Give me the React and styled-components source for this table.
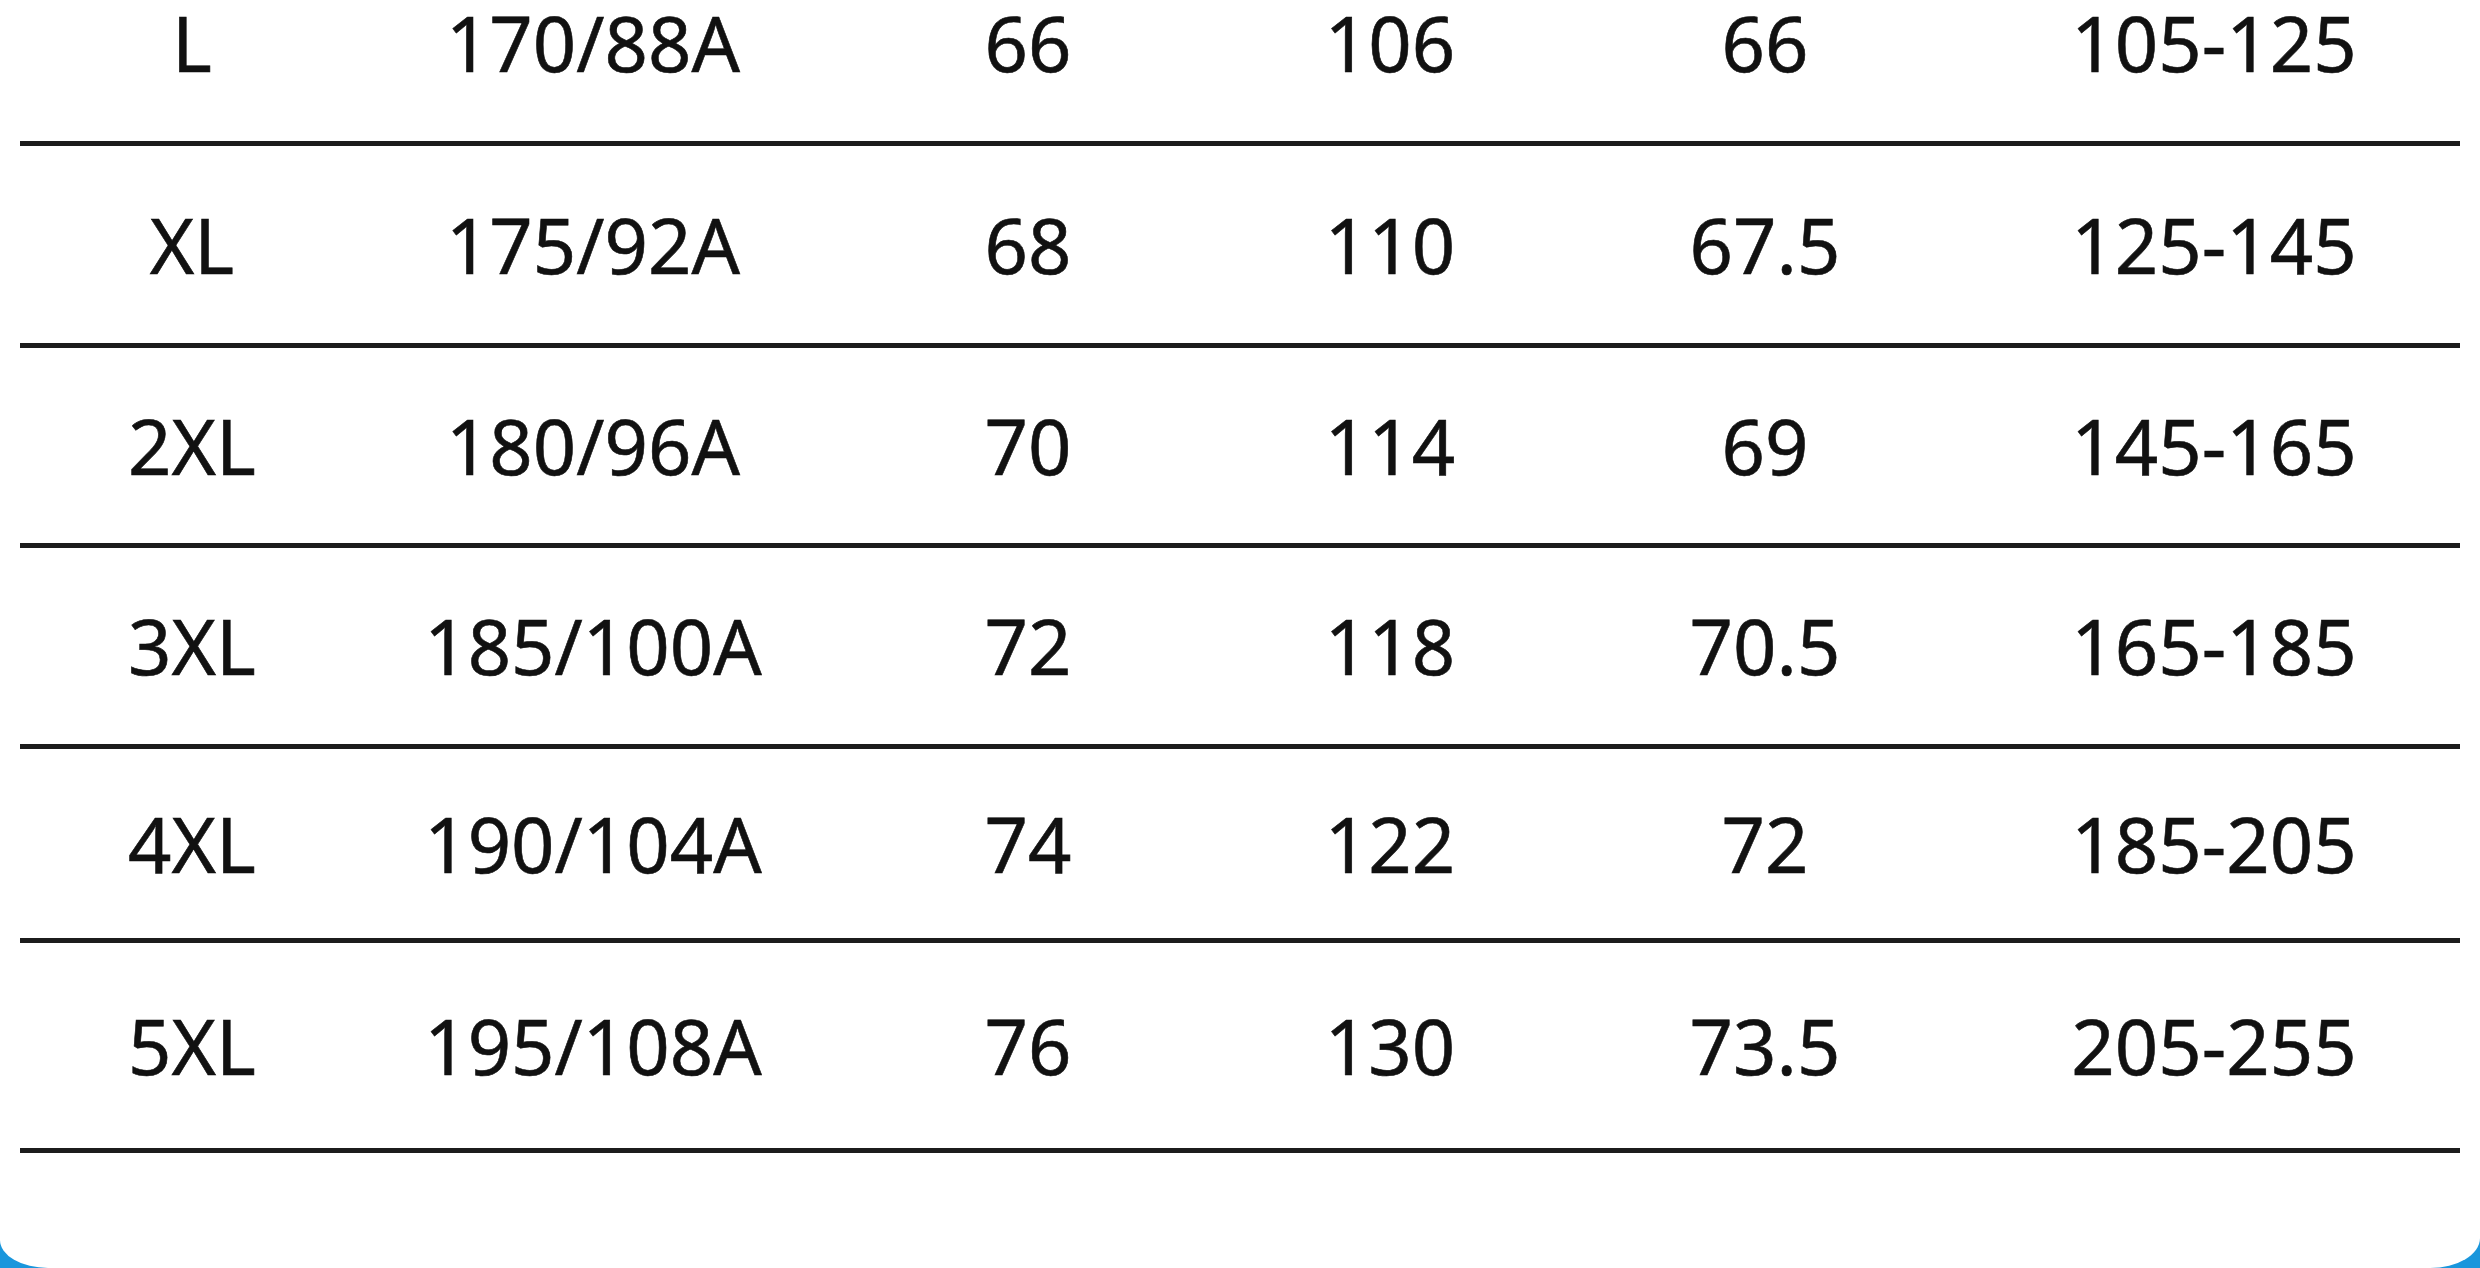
import styled, { createGlobalStyle } from 'styled-components';

const GlobalStyle = createGlobalStyle`
  html, body {
    margin: 0;
    padding: 0;
    overflow: hidden;
    background: #1996dc;
  }
`

const Sheet = styled.div`
  width: 2480px;
  height: 1268px;
  overflow: hidden;
  background: #ffffff;
  border-bottom-left-radius: 48px 28px;
  border-bottom-right-radius: 50px 30px;
`

const Table = styled.div`
  display: flex;
  flex-direction: column;
  margin: 0 20px;
`

const Row = styled.div`
  display: grid;
  grid-template-columns: 344px 458px 412px 312px 438px 460px;
  align-items: ${({lead}) => (lead ? "start" : "center")};
  padding-top: ${({lead}) => (lead ? "5px" : "0")};
  height: ${({h}) => h}px;
  border-bottom: 5px solid #1c1c1c;
  box-sizing: border-box;
`

const Cell = styled.div`
  text-align: center;
  font-family: "Noto Sans", "Open Sans", sans-serif;
  font-size: 76px;
  line-height: 1;
  color: #111111;
  -webkit-text-stroke: 0.6px #111111;
`

const rows = [
  { h: 146, cells: ["L", "170/88A", "66", "106", "66", "105-125"] },
  { h: 202, cells: ["XL", "175/92A", "68", "110", "67.5", "125-145"] },
  { h: 200, cells: ["2XL", "180/96A", "70", "114", "69", "145-165"] },
  { h: 201, cells: ["3XL", "185/100A", "72", "118", "70.5", "165-185"] },
  { h: 194, cells: ["4XL", "190/104A", "74", "122", "72", "185-205"] },
  { h: 210, cells: ["5XL", "195/108A", "76", "130", "73.5", "205-255"] },
]

const App = () => {
  return (
    <>
      <GlobalStyle />
      <Sheet>
        <Table>
          {rows.map((row, i) => (
            <Row key={i} h={row.h} lead={i === 0}>
              {row.cells.map((c, j) => (
                <Cell key={j}>{c}</Cell>
              ))}
            </Row>
          ))}
        </Table>
      </Sheet>
    </>
  );
}

export default App;
